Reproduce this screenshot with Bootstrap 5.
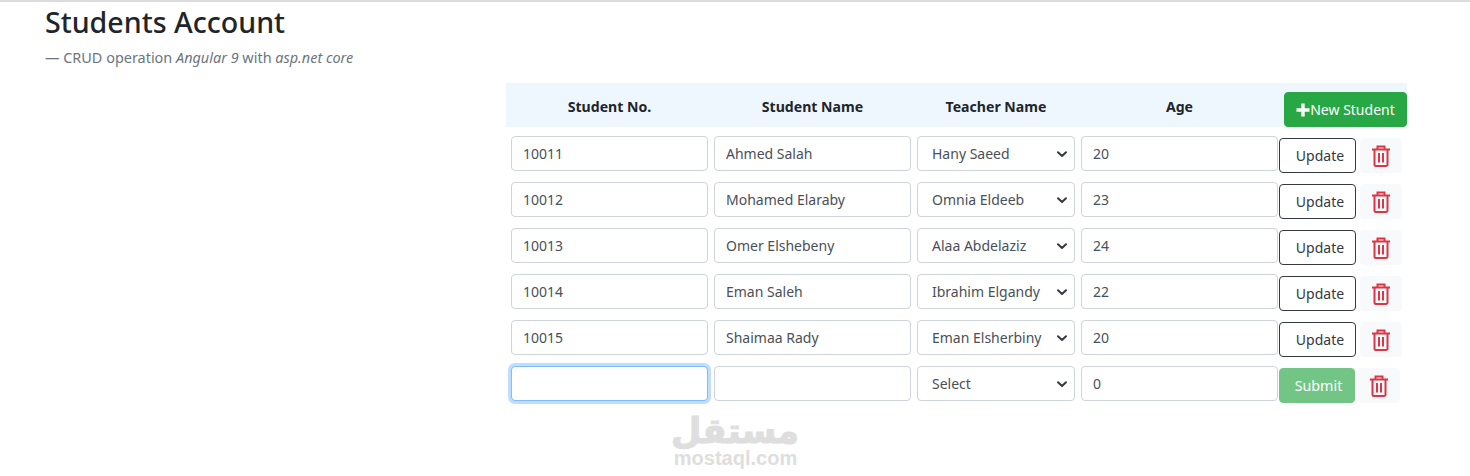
<!DOCTYPE html>
<html lang="en">
<head>
<meta charset="utf-8">
<title>Students Account</title>
<link href="https://cdn.jsdelivr.net/npm/bootstrap@5.3.0/dist/css/bootstrap.min.css" rel="stylesheet">
<style>
body { font-family: "Noto Sans", "Open Sans", sans-serif; color: #212529; border-top: 2px solid #dcdce0; min-height: 474px; overflow: hidden; position: relative; }
.page-wrap { padding-left: 45px; }
.page-title { font-size: 28.6px; font-weight: 500; line-height: 40px; margin: 0; }
.page-sub { font-size: 14.45px; line-height: 20px; margin: 6px 0 0; color: #6c757d; }
.sheet { margin: 15px 0 0 506px; width: 901px; }
.grid-line { display: grid; grid-template-columns: 197px 197px 158px 197px 77px 42px; column-gap: 6px; padding-left: 5px; align-items: start; margin-bottom: 9px; }
.grid-head { display: grid; grid-template-columns: 203px 203px 164px 203px 123px; background: #eff7fe; height: 44px; padding-left: 5px; margin-bottom: 9px; align-items: center; font-weight: 700; font-size: 14.1px; text-align: center; }
.grid-head > div { padding: 4px 6px 0 0; }
.grid-head > .head-act { padding: 0; }
.new-btn { background: #28a745; border: 1px solid #28a745; color: #fff; height: 35px; width: 123px; padding: 0; font-size: 14px; border-radius: 4px; margin: 9px 0 0 0; display: flex; align-items: center; justify-content: center; }
.fld { height: 35px; font-size: 14px; color: #495057; border-color: #ced4da; border-radius: 4px; padding: 0 11px; }
.fld.form-select { padding: 0 12px 0 14px; background-position: right 6px center; background-size: 12px 10px; background-image: url("data:image/svg+xml,%3csvg xmlns='http://www.w3.org/2000/svg' viewBox='0 0 12 10'%3e%3cpath fill='none' stroke='%23343a40' stroke-width='2' stroke-linecap='round' stroke-linejoin='round' d='M2 3.2 6 7l4-3.8'/%3e%3c/svg%3e"); }
.fld-on, .fld-on:focus { border-color: #80bdff; box-shadow: 0 0 0 3px rgba(0,123,255,.25); }
.act { height: 35px; margin-top: 2px; padding: 0; font-size: 14px; border-radius: 4px; }
.act-upd { margin-left: -5px; width: 77px; padding-left: 5px; color: #343a40; border-color: #343a40; background: #fff; }
.act-sub { margin-left: -5px; width: 76px; padding-left: 3px; font-size: 14.3px; background: #28a745; border-color: #28a745; color: #fff; opacity: .65; }
.act-del { margin-left: -7px; width: 42px; background: #f8f9fa; border: 0; display: flex; align-items: center; justify-content: center; }
.act-del-last { margin-left: -9px; }
.stamp { position: absolute; left: 660px; top: 412px; width: 150px; text-align: center; color: #dedede; line-height: 1; }
.stamp-ar { font-family: "DejaVu Sans", sans-serif; font-weight: 700; font-size: 35px; line-height: 34px; -webkit-text-stroke: 1.2px #dedede; }
.stamp-en { font-family: "Liberation Sans", sans-serif; font-weight: 700; font-size: 20px; line-height: 20px; padding-left: 1px; }
</style>
</head>
<body>
<div class="page-wrap">
  <h2 class="page-title">Students Account</h2>
  <p class="page-sub">— CRUD operation <em>Angular 9</em> with <em>asp.net core</em></p>
</div>
<div class="sheet">
  <div class="grid-head">
    <div>Student No.</div><div>Student Name</div><div>Teacher Name</div><div>Age</div>
    <div class="head-act"><button class="new-btn" type="button"><svg width="14" height="14" viewBox="0 0 14 14"><path d="M5.3 0.5h3.4v4.8h4.8v3.4H8.7v4.8H5.3V8.7H.5V5.3h4.8z" fill="#fff"/></svg>New Student</button></div>
  </div>

  <div class="grid-line">
    <input class="form-control fld" value="10011"><input class="form-control fld" value="Ahmed Salah">
    <select class="form-select fld"><option>Hany Saeed</option></select><input class="form-control fld" value="20">
    <button class="btn act act-upd" type="button">Update</button>
    <button class="btn act act-del" type="button" aria-label="Delete"><svg width="18" height="22" viewBox="0 0 18 22" fill="none" stroke="#dc3545" stroke-width="2"><path d="M0 4.5h18M5.5 4V1.5h7V4M2.5 5v14.5a1.5 1.5 0 0 0 1.5 1.5h10a1.5 1.5 0 0 0 1.5-1.5V5M7 8v9.5M11 8v9.5"/></svg></button>
  </div>
  <div class="grid-line">
    <input class="form-control fld" value="10012"><input class="form-control fld" value="Mohamed Elaraby">
    <select class="form-select fld"><option>Omnia Eldeeb</option></select><input class="form-control fld" value="23">
    <button class="btn act act-upd" type="button">Update</button>
    <button class="btn act act-del" type="button" aria-label="Delete"><svg width="18" height="22" viewBox="0 0 18 22" fill="none" stroke="#dc3545" stroke-width="2"><path d="M0 4.5h18M5.5 4V1.5h7V4M2.5 5v14.5a1.5 1.5 0 0 0 1.5 1.5h10a1.5 1.5 0 0 0 1.5-1.5V5M7 8v9.5M11 8v9.5"/></svg></button>
  </div>
  <div class="grid-line">
    <input class="form-control fld" value="10013"><input class="form-control fld" value="Omer Elshebeny">
    <select class="form-select fld"><option>Alaa Abdelaziz</option></select><input class="form-control fld" value="24">
    <button class="btn act act-upd" type="button">Update</button>
    <button class="btn act act-del" type="button" aria-label="Delete"><svg width="18" height="22" viewBox="0 0 18 22" fill="none" stroke="#dc3545" stroke-width="2"><path d="M0 4.5h18M5.5 4V1.5h7V4M2.5 5v14.5a1.5 1.5 0 0 0 1.5 1.5h10a1.5 1.5 0 0 0 1.5-1.5V5M7 8v9.5M11 8v9.5"/></svg></button>
  </div>
  <div class="grid-line">
    <input class="form-control fld" value="10014"><input class="form-control fld" value="Eman Saleh">
    <select class="form-select fld"><option>Ibrahim Elgandy</option></select><input class="form-control fld" value="22">
    <button class="btn act act-upd" type="button">Update</button>
    <button class="btn act act-del" type="button" aria-label="Delete"><svg width="18" height="22" viewBox="0 0 18 22" fill="none" stroke="#dc3545" stroke-width="2"><path d="M0 4.5h18M5.5 4V1.5h7V4M2.5 5v14.5a1.5 1.5 0 0 0 1.5 1.5h10a1.5 1.5 0 0 0 1.5-1.5V5M7 8v9.5M11 8v9.5"/></svg></button>
  </div>
  <div class="grid-line">
    <input class="form-control fld" value="10015"><input class="form-control fld" value="Shaimaa Rady">
    <select class="form-select fld"><option>Eman Elsherbiny</option></select><input class="form-control fld" value="20">
    <button class="btn act act-upd" type="button">Update</button>
    <button class="btn act act-del" type="button" aria-label="Delete"><svg width="18" height="22" viewBox="0 0 18 22" fill="none" stroke="#dc3545" stroke-width="2"><path d="M0 4.5h18M5.5 4V1.5h7V4M2.5 5v14.5a1.5 1.5 0 0 0 1.5 1.5h10a1.5 1.5 0 0 0 1.5-1.5V5M7 8v9.5M11 8v9.5"/></svg></button>
  </div>
  <div class="grid-line">
    <input class="form-control fld fld-on" value=""><input class="form-control fld" value="">
    <select class="form-select fld"><option>Select</option></select><input class="form-control fld" value="0">
    <button class="btn act act-sub" type="button">Submit</button>
    <button class="btn act act-del act-del-last" type="button" aria-label="Delete"><svg width="18" height="22" viewBox="0 0 18 22" fill="none" stroke="#dc3545" stroke-width="2"><path d="M0 4.5h18M5.5 4V1.5h7V4M2.5 5v14.5a1.5 1.5 0 0 0 1.5 1.5h10a1.5 1.5 0 0 0 1.5-1.5V5M7 8v9.5M11 8v9.5"/></svg></button>
  </div>
</div>
<div class="stamp"><div class="stamp-ar" dir="rtl" lang="ar">مستقل</div><div class="stamp-en">mostaql.com</div></div>
<script src="https://cdn.jsdelivr.net/npm/bootstrap@5.3.0/dist/js/bootstrap.bundle.min.js"></script>
</body>
</html>
